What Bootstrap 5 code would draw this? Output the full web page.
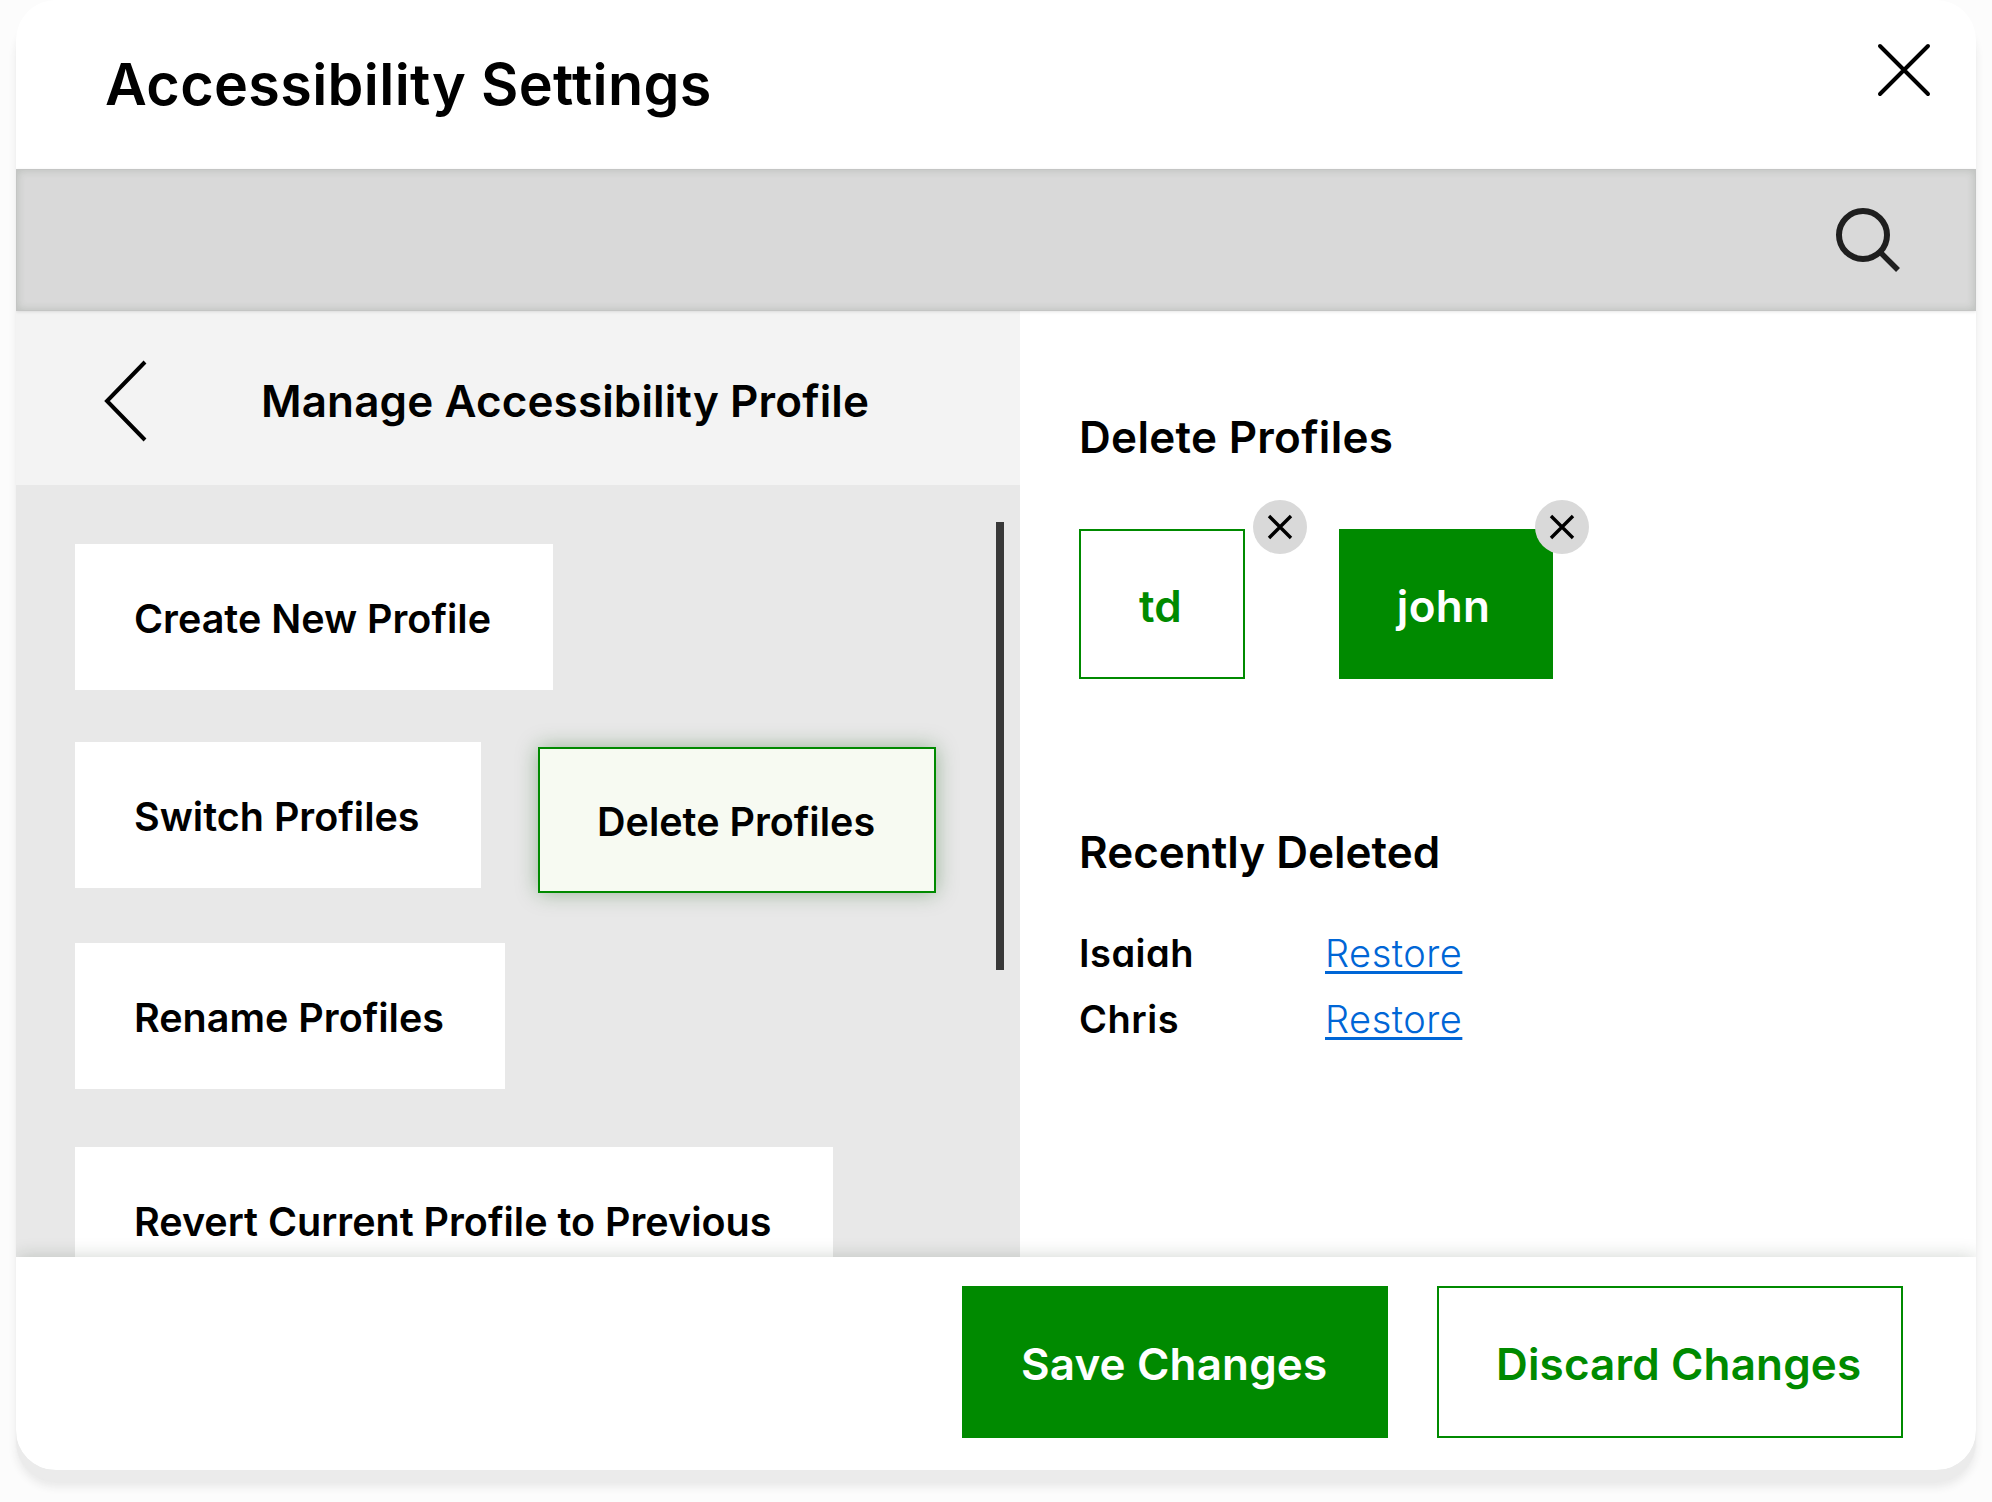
<!DOCTYPE html>
<html lang="en">
<head>
<meta charset="utf-8">
<meta name="viewport" content="width=device-width, initial-scale=1">
<title>Accessibility Settings</title>
<link href="https://cdn.jsdelivr.net/npm/bootstrap@5.3.0/dist/css/bootstrap.min.css" rel="stylesheet">
<style>
  body { background: #fcfcfc; color: #000; font-family: Inter, "Liberation Sans", sans-serif; height: 1502px; overflow: hidden; }
  .dialog { width: 1960px; height: 1470px; margin-left: 16px; border-radius: 40px; background: #fff; box-shadow: 0 12px 1px #ebebeb, 0 17px 8px #e9e9e9; overflow: hidden; }
  .dialog-head { height: 169px; padding: 0 45px 3px 89px; flex: none; }
  .dialog-title { font-size: 57.5px; font-weight: 600; line-height: 70px; letter-spacing: .35px; padding-top: 1px; }
  .close-btn { margin-bottom: 26px; }
  .searchbar { height: 142px; flex: none; background: #d9d9d9; border: 1px solid #c4c5c4; box-shadow: inset 0 0 8px rgba(60,80,60,.2), 0 1px 3px rgba(0,0,0,.1); padding-right: 74px; position: relative; z-index: 1; }
  .side { width: 1004px; background: #e8e8e8; }
  .side-head { height: 174px; background: #f3f3f3; padding: 6px 0 0 87px; flex: none; }
  .side-title { font-size: 44px; font-weight: 600; line-height: 54px; margin-left: 110px; letter-spacing: .12px; }
  .side-body { padding: 59px 0 0 59px; }
  .option { height: 146px; padding: 4px 0 0 59px; background: #fff; border: 0; border-radius: 0; font-size: 39.5px; font-weight: 600; line-height: 48px; color: #000; text-align: left; white-space: nowrap; flex: none; }
  .opt-create { width: 478px; margin-bottom: 52px; }
  .opt-switch { width: 406px; }
  .opt-row { gap: 57px; margin-bottom: 50px; }
  .opt-rename { width: 430px; margin-bottom: 58px; }
  .opt-revert { width: 758px; }
  .option.chosen { width: 398px; background: #f7faf2; border: 2px solid #008a00; box-shadow: 0 0 20px rgba(0,80,0,.34); margin-top: 5px; padding: 4px 0 0 57px; }
  .scroll-track { width: 24px; padding-top: 37px; }
  .scroll-thumb { width: 8px; height: 448px; background: #383838; }
  .detail { padding: 104px 0 0 59px; }
  .sec-title { font-size: 44px; font-weight: 600; line-height: 44px; }
  .sec-delete { letter-spacing: .3px; }
  .chips { margin: 70px 0 151px; gap: 94px; }
  .chip { height: 150px; width: 166px; border: 2px solid #008a00; border-radius: 0; padding: 4px 3px 0 0; font-size: 44px; font-weight: 600; line-height: 54px; letter-spacing: .3px; color: #008a00; }
  .chip.solid { width: 214px; background: #008a00; color: #fff; padding-right: 5px; }
  .remove { width: 54px; height: 54px; background: #d9d9d9; top: -29px; }
  .remove-out { right: -62px; }
  .remove-over { right: -36px; }
  .people { margin-top: 46px; }
  .person { font-size: 38px; line-height: 66px; }
  .person-name { width: 246px; font-weight: 600; letter-spacing: .5px; font-feature-settings: "cv11"; }
  .restore { color: #0066d6; font-weight: 300; letter-spacing: .5px; text-decoration-thickness: 3px; text-underline-offset: 4px; text-decoration-skip-ink: none; }
  .dialog-foot { height: 213px; flex: none; background: #fff; padding: 29px 73px 0 0; gap: 49px; box-shadow: 0 0 18px rgba(20,40,20,.2); position: relative; z-index: 1; }
  .act { height: 152px; width: 466px; border: 2px solid #008a00; border-radius: 0; padding: 4px 0 0 57px; font-size: 44px; font-weight: 600; line-height: 54px; letter-spacing: .15px; color: #008a00; text-align: left; white-space: nowrap; }
  .act.solid { width: 426px; background: #008a00; color: #fff; }
</style>
<script src="https://cdn.jsdelivr.net/npm/bootstrap@5.3.0/dist/js/bootstrap.bundle.min.js"></script>
</head>
<body>
<main class="dialog d-flex flex-column">
  <header class="dialog-head d-flex align-items-center justify-content-between">
    <h1 class="dialog-title mb-0">Accessibility Settings</h1>
    <button class="btn close-btn p-0 border-0 lh-1" aria-label="Close"><svg width="54" height="54" viewBox="0 0 54 54" fill="none" stroke="#000" stroke-width="4" stroke-linecap="round"><path d="M3 3l48 48M51 3L3 51"/></svg></button>
  </header>
  <div class="searchbar d-flex align-items-center justify-content-end">
    <svg width="66" height="66" viewBox="0 0 66 66" fill="none" stroke="#1f1f1f" stroke-width="6"><circle cx="28" cy="28" r="24"/><path d="M45 45l18 18" stroke-width="5.5"/></svg>
  </div>
  <div class="d-flex flex-grow-1 overflow-hidden">
    <section class="side d-flex flex-column flex-shrink-0">
      <div class="side-head d-flex align-items-center">
        <svg width="48" height="86" viewBox="0 0 48 86" fill="none" stroke="#000" stroke-width="4"><path d="M42 4L4 43l38 39"/></svg>
        <h2 class="side-title mb-0">Manage Accessibility Profile</h2>
      </div>
      <div class="d-flex flex-grow-1">
        <div class="side-body flex-grow-1 d-flex flex-column align-items-start">
          <button class="btn option opt-create">Create New Profile</button>
          <div class="opt-row d-flex align-items-start">
            <button class="btn option opt-switch">Switch Profiles</button>
            <button class="btn option chosen">Delete Profiles</button>
          </div>
          <button class="btn option opt-rename">Rename Profiles</button>
          <button class="btn option opt-revert">Revert Current Profile to Previous</button>
        </div>
        <div class="scroll-track"><div class="scroll-thumb"></div></div>
      </div>
    </section>
    <section class="detail flex-grow-1">
      <h2 class="sec-title sec-delete mb-0">Delete Profiles</h2>
      <div class="chips d-flex">
        <div class="position-relative">
          <button class="btn chip">td</button>
          <button class="btn remove remove-out position-absolute rounded-circle border-0 p-0 d-flex align-items-center justify-content-center" aria-label="Delete td"><svg width="28" height="28" viewBox="0 0 28 28" fill="none" stroke="#000" stroke-width="3.4"><path d="M3 3l22 22M25 3L3 25"/></svg></button>
        </div>
        <div class="position-relative">
          <button class="btn chip solid">john</button>
          <button class="btn remove remove-over position-absolute rounded-circle border-0 p-0 d-flex align-items-center justify-content-center" aria-label="Delete john"><svg width="28" height="28" viewBox="0 0 28 28" fill="none" stroke="#000" stroke-width="3.4"><path d="M3 3l22 22M25 3L3 25"/></svg></button>
        </div>
      </div>
      <h2 class="sec-title mb-0">Recently Deleted</h2>
      <div class="people">
        <div class="person d-flex"><span class="person-name">Isaiah</span><a class="restore" href="#">Restore</a></div>
        <div class="person d-flex"><span class="person-name">Chris</span><a class="restore" href="#">Restore</a></div>
      </div>
    </section>
  </div>
  <footer class="dialog-foot d-flex justify-content-end">
    <button class="btn act solid">Save Changes</button>
    <button class="btn act">Discard Changes</button>
  </footer>
</main>
</body>
</html>
